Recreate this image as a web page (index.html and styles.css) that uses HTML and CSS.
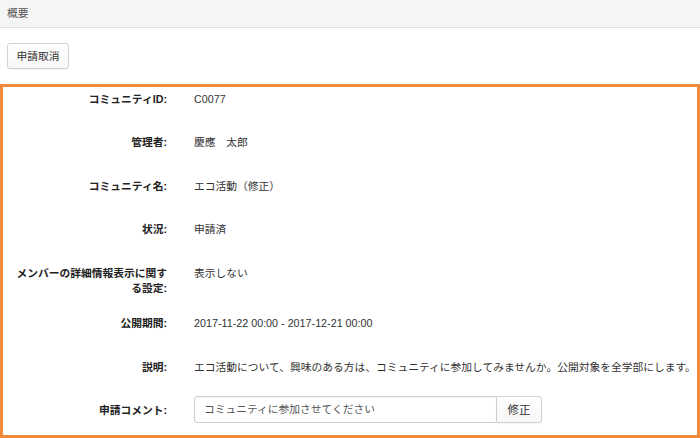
FILE: index.html
```html
<!DOCTYPE html>
<html lang="ja">
<head>
<meta charset="utf-8">
<title>概要</title>
<link rel="stylesheet" href="styles.css">
</head>
<body>
<div class="header">概要</div>
<div class="toolbar">
  <button class="btn">申請取消</button>
</div>
<div class="panel">
  <div class="row">
    <div class="label">コミュニティID:</div>
    <div class="value">C0077</div>
  </div>
  <div class="row">
    <div class="label">管理者:</div>
    <div class="value">慶應　太郎</div>
  </div>
  <div class="row">
    <div class="label">コミュニティ名:</div>
    <div class="value">エコ活動（修正）</div>
  </div>
  <div class="row">
    <div class="label">状況:</div>
    <div class="value">申請済</div>
  </div>
  <div class="row tall">
    <div class="label">メンバーの詳細情報表示に関する設定:</div>
    <div class="value">表示しない</div>
  </div>
  <div class="row r6">
    <div class="label">公開期間:</div>
    <div class="value">2017-11-22 00:00 - 2017-12-21 00:00</div>
  </div>
  <div class="row r7">
    <div class="label">説明:</div>
    <div class="value">エコ活動について、興味のある方は、コミュニティに参加してみませんか。公開対象を全学部にします。</div>
  </div>
  <div class="row last">
    <div class="label">申請コメント:</div>
    <div class="input-group">
      <div class="input">コミュニティに参加させてください</div>
      <button class="btn btn-addon">修正</button>
    </div>
  </div>
</div>
</body>
</html>
```
FILE: styles.css
```css
* { box-sizing: border-box; }
html, body { margin: 0; padding: 0; background: #fff; }
body {
  font-family: "Liberation Sans", "Noto Sans CJK JP", sans-serif;
  font-size: 10.75px;
  color: #333;
  width: 700px;
  height: 438px;
  overflow: hidden;
}
.header {
  height: 28px;
  line-height: 27px;
  background: #f5f5f5;
  border-bottom: 1px solid #dedede;
  padding-left: 7px;
  color: #555;
}
.toolbar {
  padding: 15px 0 0 7px;
  height: 41px;
}
.btn {
  font-family: inherit;
  font-size: 10.75px;
  color: #333;
  background: linear-gradient(#ffffff, #f7f7f7);
  border: 1px solid #d2d2d2;
  border-radius: 3px;
  height: 26px;
  width: 62px;
  padding: 0;
  margin: 0;
  line-height: 24px;
  box-shadow: 0 1px 1px rgba(0,0,0,0.04);
  display: block;
}
.panel {
  margin-top: 15px;
  border: 3px solid #f28a3c;
  height: 354px;
  width: 700px;
}
.row {
  display: flex;
  height: 43.5px;
  padding-top: 4.5px;
  line-height: 15px;
}
.row.tall { height: 50px; }
.row.r6 { height: 44px; }
.row.r7 { height: 41px; }
.row.last { height: 38px; padding-top: 0; }
.label {
  width: 152px;
  margin-left: 12px;
  text-align: right;
  font-weight: bold;
  color: #222;
  flex: none;
}
.row.last .label { padding-top: 6.5px; }
.value {
  margin-left: 27px;
  white-space: nowrap;
}
.input-group {
  margin-left: 27px;
  display: flex;
  height: 27px;
}
.input {
  width: 303px;
  height: 27px;
  border: 1px solid #cfcfcf;
  border-radius: 3px 0 0 3px;
  padding-left: 9px;
  line-height: 25px;
  color: #555;
  box-shadow: inset 0 1px 1px rgba(0,0,0,0.05);
}
.btn-addon {
  width: 45px;
  height: 27px;
  border-left: none;
  border-radius: 0 3px 3px 0;
  font-size: 11.5px;
}
```
